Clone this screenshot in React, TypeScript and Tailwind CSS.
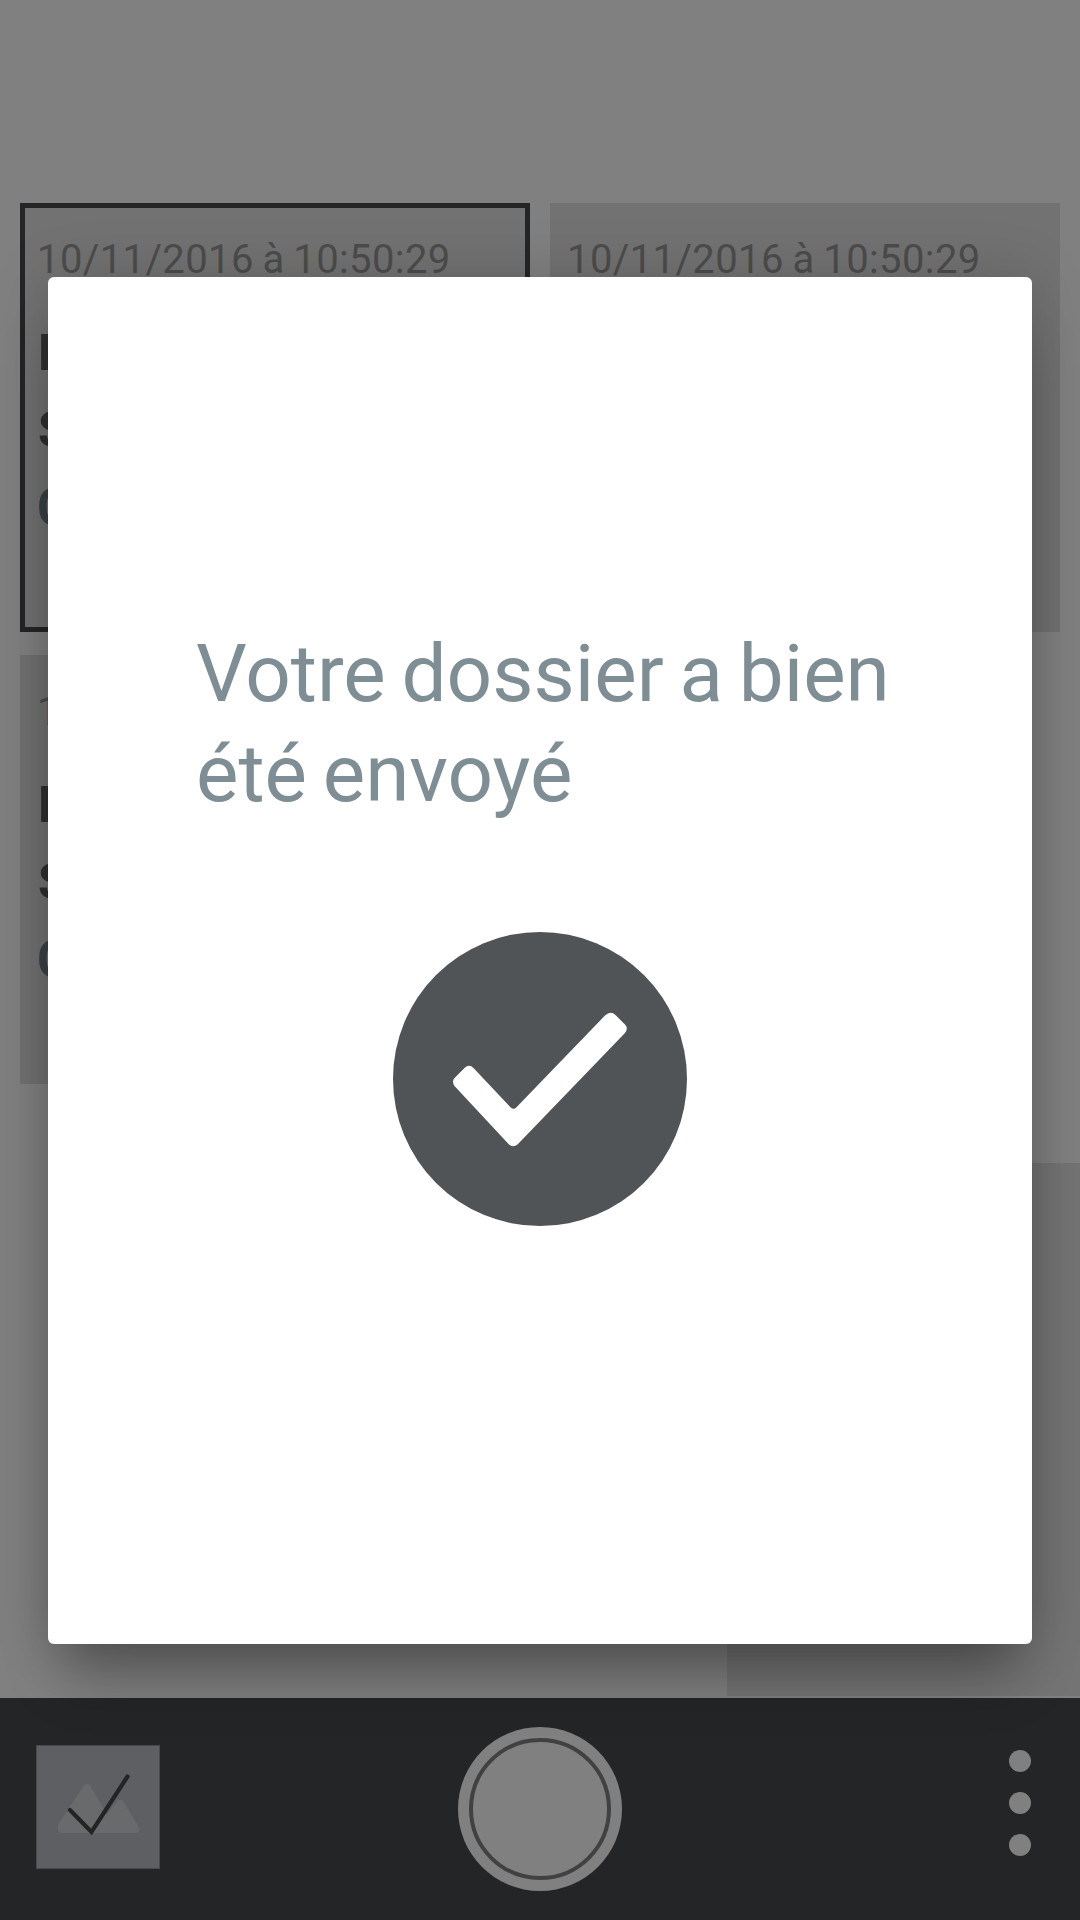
type CardProps = { selected?: boolean };

function RecordCard({ selected = false }: CardProps) {
  return (
    <div
      className={
        selected
          ? "h-[429px] overflow-hidden border-5 border-[#242526] bg-[#727272] pl-[12px] pt-[24px]"
          : "h-[429px] overflow-hidden bg-[#727272] pl-[17px] pt-[29px]"
      }
    >
      <p className="h-[83px] text-[40px] leading-[55px] tracking-[0.400px] [word-spacing:-1.700px] whitespace-nowrap text-[#4c4c4c]">
        10/11/2016 à 10:50:29
      </p>
      <div className="pl-px text-[50px] leading-[77px] font-bold text-[#303030]">
        <p>D</p>
        <p>S</p>
        <p className="-ml-px text-[51px] text-[#3a4247]">C</p>
      </div>
    </div>
  );
}

function GalleryIcon() {
  return (
    <div className="mb-[4px] size-[124px] border border-[#48494b] bg-[#5e5f63]">
      <svg viewBox="36 1746 122 122" className="size-[122px]">
        <g fill="#696a6b" stroke="#696a6b" strokeWidth="8" strokeLinejoin="round">
          <path d="M86 1788 L61 1826 V1829 H110 Z" />
          <path d="M119 1804 L100 1829 H134.500 Z" />
        </g>
        <path
          d="M69 1810 L90.500 1832 L126.500 1776.500"
          fill="none"
          stroke="#242424"
          strokeWidth="4.200"
          strokeLinecap="round"
        />
      </svg>
    </div>
  );
}

function BottomBar() {
  return (
    <div className="grid h-[222px] grid-cols-3 items-center bg-[#242527] px-[36px]">
      <GalleryIcon />
      <div className="flex size-[164px] items-center justify-center justify-self-center rounded-full bg-[#808080]">
        <div className="size-[142px] rounded-full border-4 border-[#414141]" />
      </div>
      <div className="mr-[13px] mb-[12px] flex flex-col gap-[20px] justify-self-end">
        <span className="size-[22px] rounded-full bg-[#808080]" />
        <span className="size-[22px] rounded-full bg-[#808080]" />
        <span className="size-[22px] rounded-full bg-[#808080]" />
      </div>
    </div>
  );
}

function SentDialog() {
  return (
    <div className="absolute inset-x-[48px] top-[276.500px] flex h-[1367px] flex-col items-center rounded-[6px] bg-white shadow-[0_44px_56px_-16px_rgba(0,0,0,0.33),0_0_60px_rgba(0,0,0,0.16)]">
      <p className="mt-[347px] ml-[2px] w-[690px] text-[80px] leading-[100px] [word-spacing:-4.100px] whitespace-nowrap text-[#7f8e95]">
        Votre dossier a bien
        <br />
        été envoyé
      </p>
      <svg viewBox="0 0 294 294" className="mt-[108px] size-[294px]">
        <circle cx="147" cy="147" r="147" fill="#515457" />
        <path
          d="M71.500 136 Q76 131.500 80.500 136 L117.500 175.300 Q120.500 178.300 123.500 175.300 L212 83.500 Q217.500 78.500 222.500 83 L232 92.500 Q236 96.500 231.500 101.500 L124.500 212.500 Q120 216 116 212.500 L61.500 154 Q58.500 149.500 61.500 146 Z"
          fill="#fff"
        />
      </svg>
    </div>
  );
}

export default function App() {
  return (
    <div className="relative h-[1920px] w-[1080px] overflow-hidden bg-[#808080] font-[Roboto,sans-serif]">
      <div className="h-[1163px] px-[20px] pt-[203px]">
        <div className="grid grid-cols-2 gap-x-[20px] gap-y-[23px]">
          <RecordCard selected />
          <RecordCard />
          <RecordCard />
        </div>
      </div>
      <div className="flex h-[535px] justify-end">
        <div className="h-[533px] w-[353px] bg-[#747474]" />
      </div>
      <BottomBar />
      <SentDialog />
    </div>
  );
}
